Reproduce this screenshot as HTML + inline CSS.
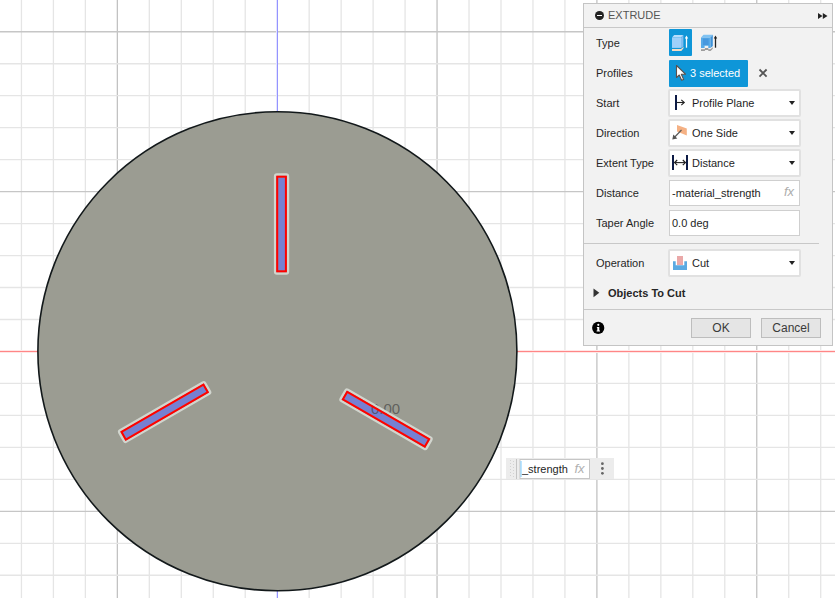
<!DOCTYPE html>
<html><head><meta charset="utf-8">
<style>
*{margin:0;padding:0;box-sizing:border-box}
html,body{width:835px;height:598px;overflow:hidden;background:#fff;font-family:"Liberation Sans",sans-serif}
#vp{position:absolute;left:0;top:0}
#ov{position:absolute;left:0;top:0;z-index:5}
.panel{position:absolute;left:583px;top:3px;width:250px;height:343px;background:#f2f2f2;border:1px solid #c4c4c4}
.hdr{position:absolute;left:0;top:0;width:248px;height:24px;border-bottom:1px solid #c8c8c8}
.abs{position:absolute}
.lbl{position:absolute;left:12px;font-size:11px;color:#262626;line-height:14px;white-space:nowrap}
.dd{position:absolute;left:84px;width:133px;height:28px;background:#fff;border:2px solid #e1e1e1;border-radius:2px}
.dd .t{position:absolute;left:22px;top:5px;font-size:11px;color:#1e1e1e;line-height:14px;white-space:nowrap}
.caret{position:absolute;left:119px;top:10px;width:0;height:0;border-left:3px solid transparent;border-right:3px solid transparent;border-top:4px solid #222}
.inp{position:absolute;left:85px;width:131px;height:26px;background:#fff;border:1px solid #cfcfcf}
.inp .t{position:absolute;left:2px;top:5px;font-size:11px;color:#1e1e1e;line-height:14px;white-space:nowrap}
.btn{position:absolute;top:314px;width:60px;height:20px;background:#e5e5e5;border:1px solid #bdbdbd;font-size:12px;color:#3a3a3a;text-align:center;line-height:18px}
.sep{position:absolute;left:0;height:1px;background:#c8c8c8}
</style></head><body>
<svg id="vp" width="835" height="598" viewBox="0 0 835 598">
<defs>
<rect id="sblue" x="-3.4" y="-46.3" width="6.8" height="92.7" fill="#7680d2"/>
<g id="sframe">
  <rect x="-6.45" y="-49.55" width="12.9" height="99.1" rx="1.8" fill="none" stroke="#d1d5ce" stroke-width="2.4"/>
  <rect x="-4.35" y="-47.3" width="8.7" height="94.6" fill="none" stroke="#ff0000" stroke-width="2"/>
</g>
</defs>
<line x1="21.44" y1="0" x2="21.44" y2="598" stroke="#e5e5e5" stroke-width="1.3"/>
<line x1="53.41" y1="0" x2="53.41" y2="598" stroke="#e5e5e5" stroke-width="1.3"/>
<line x1="85.38" y1="0" x2="85.38" y2="598" stroke="#e5e5e5" stroke-width="1.3"/>
<line x1="117.35" y1="0" x2="117.35" y2="598" stroke="#c2c2c2" stroke-width="1.3"/>
<line x1="149.32" y1="0" x2="149.32" y2="598" stroke="#e5e5e5" stroke-width="1.3"/>
<line x1="181.29" y1="0" x2="181.29" y2="598" stroke="#e5e5e5" stroke-width="1.3"/>
<line x1="213.26" y1="0" x2="213.26" y2="598" stroke="#e5e5e5" stroke-width="1.3"/>
<line x1="245.23" y1="0" x2="245.23" y2="598" stroke="#e5e5e5" stroke-width="1.3"/>
<line x1="309.17" y1="0" x2="309.17" y2="598" stroke="#e5e5e5" stroke-width="1.3"/>
<line x1="341.14" y1="0" x2="341.14" y2="598" stroke="#e5e5e5" stroke-width="1.3"/>
<line x1="373.11" y1="0" x2="373.11" y2="598" stroke="#e5e5e5" stroke-width="1.3"/>
<line x1="405.08" y1="0" x2="405.08" y2="598" stroke="#e5e5e5" stroke-width="1.3"/>
<line x1="437.05" y1="0" x2="437.05" y2="598" stroke="#c2c2c2" stroke-width="1.3"/>
<line x1="469.02" y1="0" x2="469.02" y2="598" stroke="#e5e5e5" stroke-width="1.3"/>
<line x1="500.99" y1="0" x2="500.99" y2="598" stroke="#e5e5e5" stroke-width="1.3"/>
<line x1="532.96" y1="0" x2="532.96" y2="598" stroke="#e5e5e5" stroke-width="1.3"/>
<line x1="564.93" y1="0" x2="564.93" y2="598" stroke="#e5e5e5" stroke-width="1.3"/>
<line x1="596.90" y1="0" x2="596.90" y2="598" stroke="#c2c2c2" stroke-width="1.3"/>
<line x1="628.87" y1="0" x2="628.87" y2="598" stroke="#e5e5e5" stroke-width="1.3"/>
<line x1="660.84" y1="0" x2="660.84" y2="598" stroke="#e5e5e5" stroke-width="1.3"/>
<line x1="692.81" y1="0" x2="692.81" y2="598" stroke="#e5e5e5" stroke-width="1.3"/>
<line x1="724.78" y1="0" x2="724.78" y2="598" stroke="#e5e5e5" stroke-width="1.3"/>
<line x1="756.75" y1="0" x2="756.75" y2="598" stroke="#c2c2c2" stroke-width="1.3"/>
<line x1="788.72" y1="0" x2="788.72" y2="598" stroke="#e5e5e5" stroke-width="1.3"/>
<line x1="820.69" y1="0" x2="820.69" y2="598" stroke="#e5e5e5" stroke-width="1.3"/>
<line x1="0" y1="31.76" x2="835" y2="31.76" stroke="#c6c6c6" stroke-width="1.3"/>
<line x1="0" y1="63.73" x2="835" y2="63.73" stroke="#e5e5e5" stroke-width="1.3"/>
<line x1="0" y1="95.70" x2="835" y2="95.70" stroke="#e5e5e5" stroke-width="1.3"/>
<line x1="0" y1="127.67" x2="835" y2="127.67" stroke="#e5e5e5" stroke-width="1.3"/>
<line x1="0" y1="159.64" x2="835" y2="159.64" stroke="#e5e5e5" stroke-width="1.3"/>
<line x1="0" y1="191.61" x2="835" y2="191.61" stroke="#c6c6c6" stroke-width="1.3"/>
<line x1="0" y1="223.58" x2="835" y2="223.58" stroke="#e5e5e5" stroke-width="1.3"/>
<line x1="0" y1="255.55" x2="835" y2="255.55" stroke="#e5e5e5" stroke-width="1.3"/>
<line x1="0" y1="287.52" x2="835" y2="287.52" stroke="#e5e5e5" stroke-width="1.3"/>
<line x1="0" y1="319.49" x2="835" y2="319.49" stroke="#e5e5e5" stroke-width="1.3"/>
<line x1="0" y1="383.43" x2="835" y2="383.43" stroke="#e5e5e5" stroke-width="1.3"/>
<line x1="0" y1="415.40" x2="835" y2="415.40" stroke="#e5e5e5" stroke-width="1.3"/>
<line x1="0" y1="447.37" x2="835" y2="447.37" stroke="#e5e5e5" stroke-width="1.3"/>
<line x1="0" y1="479.34" x2="835" y2="479.34" stroke="#e5e5e5" stroke-width="1.3"/>
<line x1="0" y1="511.31" x2="835" y2="511.31" stroke="#c6c6c6" stroke-width="1.3"/>
<line x1="0" y1="543.28" x2="835" y2="543.28" stroke="#e5e5e5" stroke-width="1.3"/>
<line x1="0" y1="575.25" x2="835" y2="575.25" stroke="#e5e5e5" stroke-width="1.3"/>
<line x1="277" y1="0" x2="277" y2="598" stroke="#e4e4ff" stroke-width="2"/><line x1="277.5" y1="0" x2="277.5" y2="598" stroke="#9494ff"/>
<line x1="0" y1="351.5" x2="835" y2="351.5" stroke="#ffe6e6" stroke-width="3"/><line x1="0" y1="351.5" x2="835" y2="351.5" stroke="#ff8686"/>
<circle cx="277.4" cy="351.3" r="239.5" fill="#9b9c92" stroke="#12181a" stroke-width="1.6"/>
<use href="#sblue" transform="translate(281.55 224)"/>
<use href="#sblue" transform="rotate(120 277.4 351.8) translate(281.55 224)"/>
<use href="#sblue" transform="rotate(-120 277.4 351.8) translate(281.55 224)"/>
<text x="371" y="414" font-family="Liberation Sans" font-size="15" fill="#3a3a3a" fill-opacity="0.62">0.00</text>
<use href="#sframe" transform="translate(281.55 224)"/>
<use href="#sframe" transform="rotate(120 277.4 351.8) translate(281.55 224)"/>
<use href="#sframe" transform="rotate(-120 277.4 351.8) translate(281.55 224)"/>
<!-- dimension input -->
<rect x="506" y="458" width="108" height="21" fill="#ececec"/>
<path d="M510.5 460v17M513.5 461v17" stroke="#d2d2d2" stroke-dasharray="1 2"/>
<line x1="516.5" y1="459" x2="516.5" y2="479" stroke="#c4c4c4"/>
<rect x="520" y="459.5" width="69.5" height="19" fill="#fff" stroke="#c6c6c6"/>
<text x="522" y="473" font-family="Liberation Sans" font-size="11" fill="#1e1e1e">_strength</text>
<line x1="521" y1="461" x2="521" y2="477" stroke="#8fd4ff" stroke-width="1.2"/>
<text x="574.5" y="473" font-family="Liberation Sans" font-style="italic" font-size="13" fill="#b0b0b0">fx</text>
<circle cx="602.4" cy="463.7" r="1.4" fill="#666"/>
<circle cx="602.4" cy="468.5" r="1.4" fill="#666"/>
<circle cx="602.4" cy="473.3" r="1.4" fill="#666"/>
</svg>

<div class="panel">
  <div class="hdr">
    <div class="abs" style="left:11px;top:7px;width:9px;height:9px;border-radius:50%;background:#222"></div>
    <div class="abs" style="left:13px;top:11px;width:5px;height:1px;background:#fff"></div>
    <div class="lbl" style="left:24px;top:4px;color:#555">EXTRUDE</div>
  </div>
  <div class="lbl" style="top:32px">Type</div>
  <div class="abs" style="left:85px;top:25px;width:23px;height:27px;background:#0e96d8;border-radius:1px"></div>
  <div class="lbl" style="top:62px">Profiles</div>
  <div class="abs" style="left:85px;top:56px;width:79px;height:27px;background:#0e96d8;border-radius:1px">
    <div class="abs" style="left:21px;top:6px;font-size:11px;color:#fff;line-height:14px;white-space:nowrap">3 selected</div>
  </div>
  <div class="lbl" style="top:92px">Start</div>
  <div class="dd" style="top:85px"><div class="t">Profile Plane</div><div class="caret"></div></div>
  <div class="lbl" style="top:122px">Direction</div>
  <div class="dd" style="top:115px"><div class="t">One Side</div><div class="caret"></div></div>
  <div class="lbl" style="top:152px">Extent Type</div>
  <div class="dd" style="top:145px"><div class="t">Distance</div><div class="caret"></div></div>
  <div class="lbl" style="top:182px">Distance</div>
  <div class="inp" style="top:176px"><div class="t">-material_strength</div></div>
  <div class="lbl" style="top:212px">Taper Angle</div>
  <div class="inp" style="top:206px"><div class="t">0.0 deg</div></div>
  <div class="sep" style="top:239px;width:235px"></div>
  <div class="lbl" style="top:252px">Operation</div>
  <div class="dd" style="top:245px"><div class="t">Cut</div><div class="caret"></div></div>
  <div class="lbl" style="left:24px;top:282px;font-weight:bold">Objects To Cut</div>
  <div class="sep" style="top:305px;width:248px"></div>
  <div class="btn" style="left:107px">OK</div>
  <div class="btn" style="left:177px">Cancel</div>
</div>

<svg id="ov" width="835" height="598" viewBox="0 0 835 598">
<!-- header double arrow -->
<path d="M818 13L822.5 16L818 19ZM822.8 13L827.5 16L822.8 19Z" fill="#222"/>
<!-- type icon 1: cube -->
<path d="M672 37.5L674.2 35H683.4L681 37.5Z" fill="#b6defc"/>
<rect x="672" y="37.5" width="9" height="10.4" fill="#9dd0fa"/>
<path d="M681 37.5L683.4 35V46.4L681 47.9Z" fill="#80bdf0"/>
<path d="M672 49H681L683.5 46.8V48.3L681.3 51H672Z" fill="#f6dcc2"/>
<path d="M686.5 47.7V37.5" stroke="#fff" stroke-width="1.3"/>
<path d="M684.8 38.6L686.5 35.6L688.2 38.6Z" fill="#fff"/>
<!-- type icon 2: thin -->
<path d="M701 37.5L703.5 34.8H712.8L710.5 37.5Z" fill="#7fc2f2"/>
<path d="M701 37.5H710.5V47.9H708.3V45.8H704.6V47.9H701Z" fill="#57aae8"/>
<rect x="703" y="38.5" width="5.6" height="6.5" fill="#4798de"/>
<path d="M710.5 37.5L712.8 34.8V46L710.5 47.9Z" fill="#3f92d8"/>
<path d="M701 49.2H704.6L705.2 48.1H708.3V49.2H710.4L712.8 47.2V48.8L710.6 50.9H708.3V49.9H705.3L704.7 50.9H701Z" fill="#9c9c9c"/>
<path d="M715.5 47.7V37.5" stroke="#222" stroke-width="1.3"/>
<path d="M713.8 38.6L715.5 35.6L717.2 38.6Z" fill="#222"/>
<!-- cursor -->
<path d="M676.5 65.5V77.5L679.3 75L681.6 80.3L683.6 79.4L681.3 74.2H685.5Z" fill="#fff" stroke="#5c504b" stroke-width="1.1" stroke-linejoin="round"/>
<!-- X -->
<path d="M759.5 69.5L766.6 76.6M766.6 69.5L759.5 76.6" stroke="#555" stroke-width="1.8"/>
<!-- start icon -->
<rect x="675" y="95" width="2" height="15" fill="#0d1b45"/>
<path d="M677 102.5H684" stroke="#222" stroke-width="1.1"/>
<path d="M681.3 99.8L684.3 102.5L681.3 105.2" fill="none" stroke="#222" stroke-width="1.1"/>
<!-- direction icon -->
<path d="M677 125L686.8 128.6V135.6L677 131.5Z" fill="#f5b184"/>
<path d="M681.5 130L673.3 138.5" stroke="#555" stroke-width="1.1"/>
<path d="M672.3 139.6L673.3 134.6L677.3 138.6Z" fill="#555"/>
<!-- extent icon -->
<rect x="672" y="155" width="2" height="15" fill="#0d1b45"/>
<rect x="686" y="155" width="2" height="15" fill="#0d1b45"/>
<path d="M674.5 162.6H685.5" stroke="#222" stroke-width="1.1"/>
<path d="M677.2 160L674.6 162.6L677.2 165.2M682.8 160L685.4 162.6L682.8 165.2" fill="none" stroke="#222" stroke-width="1.2"/>
<!-- fx -->
<text x="784" y="196" font-family="Liberation Sans" font-style="italic" font-size="13" fill="#adadad">fx</text>
<!-- cut icon -->
<rect x="677" y="256" width="6" height="9" fill="#eaa9a9"/>
<path d="M673 261.2H675.7V265.3H684.3V261.2H687V270H673Z" fill="#5aa9e2"/>
<!-- objects to cut triangle -->
<path d="M593.5 288.5L599.3 292.8L593.5 297.2Z" fill="#333"/>
<!-- info icon -->
<circle cx="598.2" cy="327.9" r="6.1" fill="#000"/>
<circle cx="598.3" cy="324.8" r="1.1" fill="#fff"/>
<path d="M596.9 327H599.3V330.6H600V331.6H596.6V330.6H597.3V328H596.9Z" fill="#fff"/>
</svg>
</body></html>
